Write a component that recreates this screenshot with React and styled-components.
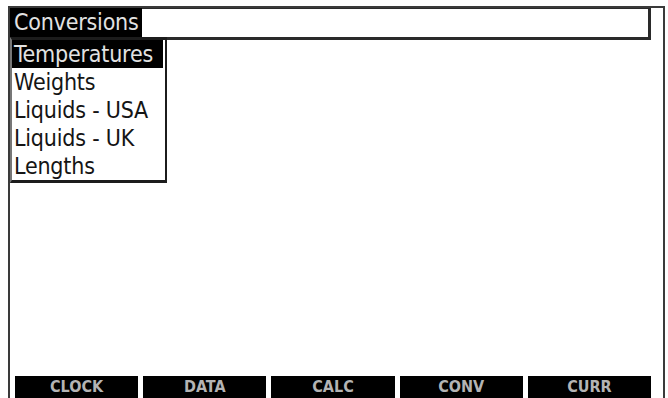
import React from "react";
import styled, { createGlobalStyle } from "styled-components";

const GlobalStyle = createGlobalStyle`
  html, body {
    margin: 0;
    padding: 0;
    background: #ffffff;
    overflow: hidden;
  }
  body {
    font-family: "DejaVu Sans Condensed", "Liberation Sans Narrow", "DejaVu Sans", sans-serif;
  }
`;

const menuItems = ["Temperatures", "Weights", "Liquids - USA", "Liquids - UK", "Lengths"];
const tabs = ["CLOCK", "DATA", "CALC", "CONV", "CURR"];

const App = () => {
  return (
    <>
      <GlobalStyle />
      <Screen>
        <Header>
          <Title>Conversions</Title>
          <InputBox />
        </Header>
        <Menu>
          {menuItems.map((item, i) => (
            <MenuItem key={item} active={i === 0}>
              {item}
            </MenuItem>
          ))}
        </Menu>
        <Spacer />
        <TabBar>
          {tabs.map((tab) => (
            <Tab key={tab}>{tab}</Tab>
          ))}
        </TabBar>
      </Screen>
    </>
  );
};

const Screen = styled.div`
  position: relative;
  box-sizing: border-box;
  margin: 6px 0 0 8px;
  width: 657px;
  height: 392px;
  border: 2px solid #3a3a3a;
  border-bottom: none;
  display: flex;
  flex-direction: column;
`;

const Header = styled.div`
  display: flex;
  align-items: flex-start;
  padding-right: 12px;
`;

const Title = styled.div`
  background: #000;
  color: #e2e2e2;
  font-size: 23px;
  line-height: 29px;
  height: 29px;
  padding: 0 2px 0 4px;
  width: 126px;
  white-space: nowrap;
  letter-spacing: -0.2px;
`;

const InputBox = styled.div`
  flex: 1;
  box-sizing: border-box;
  height: 32px;
  border: 3px solid #2a2a2a;
  border-top: 1px solid #2a2a2a;
  border-left: none;
  background: #fff;
`;

const Menu = styled.div`
  position: absolute;
  left: 0;
  top: 29px;
  width: 157px;
  box-sizing: border-box;
  border: 3px solid #1c1c1c;
  border-left: 2px solid #777;
  border-right: 2px solid #1c1c1c;
  background: #fff;
  display: flex;
  flex-direction: column;
`;

const MenuItem = styled.div`
  height: 28px;
  line-height: 28px;
  font-size: 23px;
  padding-left: 2px;
  margin-right: 2px;
  white-space: nowrap;
  letter-spacing: -0.2px;
  background: ${(p) => (p.active ? "#000" : "transparent")};
  color: ${(p) => (p.active ? "#e2e2e2" : "#151515")};
`;

const Spacer = styled.div`
  flex: 1;
`;

const TabBar = styled.div`
  display: flex;
  gap: 5px;
  padding: 0 12px 0 5px;
  height: 22px;
`;

const Tab = styled.div`
  flex: 1;
  background: #000;
  color: #b4b4b4;
  font-size: 16px;
  font-weight: bold;
  text-align: center;
  line-height: 22px;
`;

export default App;
